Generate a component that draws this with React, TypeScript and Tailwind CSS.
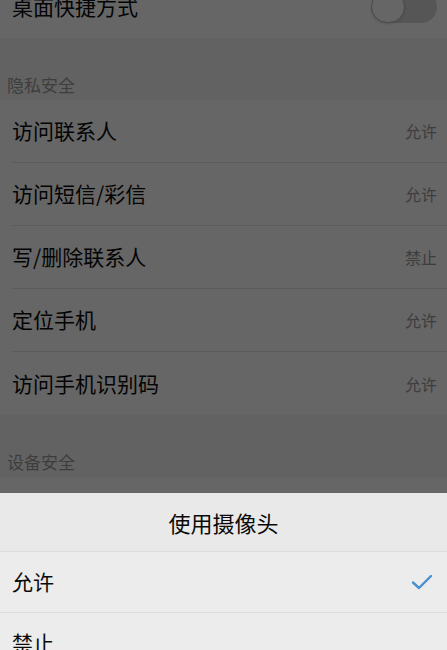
import { useState } from "react";

type Perm = { label: string; value: string };

const privacyPerms: Perm[] = [
  { label: "访问联系人", value: "允许" },
  { label: "访问短信/彩信", value: "允许" },
  { label: "写/删除联系人", value: "禁止" },
  { label: "定位手机", value: "允许" },
  { label: "访问手机识别码", value: "允许" },
];

const font = { fontFamily: '"Noto Sans CJK SC", "Noto Sans", sans-serif' };

const SectionHeader = ({ title }: { title: string }) => (
  <div className="h-[62px] flex items-end pb-[5px] pl-[7px] text-[17px] leading-[20px] text-[#999]">
    {title}
  </div>
);

const PermRow = ({ perm, last }: { perm: Perm; last?: boolean }) => (
  <div className="bg-white pl-[12px]">
    <div
      className={
        "h-[63px] flex items-center justify-between pr-[10px] " +
        (last ? "" : "border-b border-[#e4e4e4]")
      }
    >
      <span className="text-[21px] text-[#0a0a0a]">{perm.label}</span>
      <span className="text-[16px] text-[#999]">{perm.value}</span>
    </div>
  </div>
);

export default function App() {
  const [choice, setChoice] = useState("允许");

  return (
    <div className="relative h-[650px] w-full overflow-hidden bg-[#f6f6f6]" style={font}>
      {/* settings list behind the dialog */}
      <div className="-mt-[25px]">
        <div className="bg-white pl-[12px]">
          <div className="h-[63px] flex items-center justify-between pr-[10px]">
            <span className="text-[21px] text-[#0a0a0a]">桌面快捷方式</span>
            <div className="w-[66px] h-[32px] rounded-full bg-[#d6d6d6]">
              <div className="w-[34px] h-[32px] rounded-full bg-white border border-[#bdbdbd] shadow-sm" />
            </div>
          </div>
        </div>
        <SectionHeader title="隐私安全" />
        {privacyPerms.map((p, i) => (
          <PermRow key={p.label} perm={p} last={i === privacyPerms.length - 1} />
        ))}
        <SectionHeader title="设备安全" />
        <PermRow perm={{ label: "使用摄像头", value: "允许" }} />
      </div>

      {/* dim overlay */}
      <div className="absolute inset-0 bg-black/60" />

      {/* bottom sheet */}
      <div className="absolute inset-x-0 top-[493px] bottom-0 bg-[#ececec]">
        <div className="h-[59px] flex items-center justify-center border-b border-[#dcdcdc] bg-[#e9e9e9] text-[22px] text-[#0a0a0a]">
          使用摄像头
        </div>
        {["允许", "禁止"].map((opt) => (
          <button
            key={opt}
            type="button"
            onClick={() => setChoice(opt)}
            className="w-full h-[61px] flex items-center justify-between pl-[12px] pr-[14px] border-b border-[#dedede] text-left"
          >
            <span className="text-[21px] text-[#0a0a0a]">{opt}</span>
            {choice === opt && (
              <svg width="22" height="18" viewBox="0 0 22 18" fill="none">
                <path
                  d="M2 9.5 L8 15 L20 3"
                  stroke="#4a90cf"
                  strokeWidth="2.4"
                  strokeLinecap="round"
                  strokeLinejoin="round"
                />
              </svg>
            )}
          </button>
        ))}
      </div>
    </div>
  );
}
